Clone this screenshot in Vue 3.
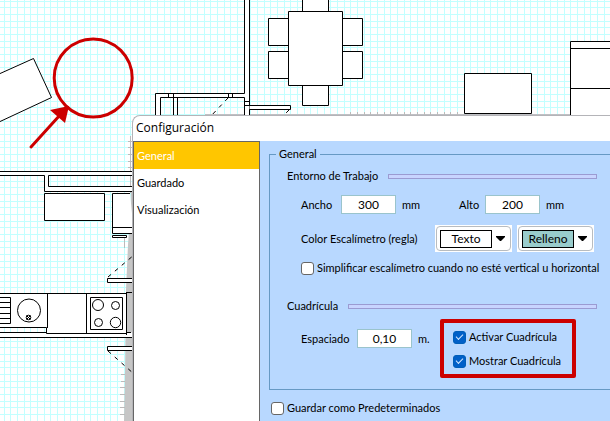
<script setup>
import { ref } from 'vue'

const sections = ['General', 'Guardado', 'Visualización']
const active = ref('General')
const width = ref('300')
const height = ref('200')
const spacing = ref('0,10')
const simplify = ref(false)
const gridOn = ref(true)
const gridVisible = ref(true)
const saveDefault = ref(false)
</script>

<template>
  <main class="stage">
    <svg class="plan" width="100%" height="100%" aria-hidden="true">
      <defs>
        <pattern id="grid" width="20" height="20" patternUnits="userSpaceOnUse">
          <path d="M4.5 0V20M10.5 0V20M17.5 0V20M0 1.5H20M0 7.5H20M0 14.5H20" stroke="#c3ffff" fill="none" />
        </pattern>
      </defs>
      <rect width="100%" height="100%" fill="url(#grid)" />

      <!-- dialog shadow -->
      <path d="M131 190L130 215L128 245L126 290L125 375L124 421H134V190Z" fill="#c6c6c6" />
      <path d="M205 114H610V117H205Z" fill="#bfc0c4" />
      <path class="ticks" d="M384.5 112V116M390.5 112V116M397.5 112V116M404.5 112V116M410.5 112V116M417.5 112V116M424.5 112V116M430.5 112V116M437.5 112V116M444.5 112V116M450.5 112V116M457.5 112V116M350.5 112V116M357.5 112V116M364.5 112V116M370.5 112V116M377.5 112V116M130.5 136V193M128 141.5H133M128 147.5H133M128 154.5H133M128 161.5H133M128 167.5H133M124.5 238V248M121 374.5H125M121 381.5H125M120 387.5H125M120 394.5H125M120 401.5H125M120 407.5H125M120 414.5H125" />

      <g class="ink">
        <!-- walls -->
        <path class="gap" d="M244.500 -1V93.500H155.500V118H160.500V97.500H244.500V118H249.500V-1Z" />
        <path d="M168.500 93V97M173.500 93V118M177.500 97V118M228.500 93V97M232.500 93V97M244 101.500H249" />
        <path class="gap" d="M249.500 105.500H290.500V109.500H249.500" />
        <path d="M244 105.500H250" />
        <path class="dash" d="M228 98L210 117M289 110L283 116" />
        <path class="gap" d="M-1 171.500H140V175.500H48.500V186.500H140V191.500H44.500V175.500H-1Z" />

        <!-- dining table -->
        <path class="solid" d="M268.500 18.500H288.500V45.500H268.500ZM268.500 51.500H288.500V78.500H268.500ZM342.500 18.500H362.500V45.500H342.500ZM342.500 51.500H362.500V78.500H342.500ZM302.500 -1H328.500V11.500H302.500ZM302.500 85.500H328.500V105.500H302.500ZM288.500 11.500H342.500V85.500H288.500Z" />

        <!-- furniture -->
        <path class="solid" d="M464.500 73.500H531.500V113.500H464.500Z" />
        <path class="solid" d="M570.500 41.500H2000V118H570.500ZM570.500 48.500H2000M570.500 88.500H2000" />
        <path class="solid" d="M-1 74L33.500 58.500L51.500 97.500L-1 122Z" />
        <path class="solid" d="M44.500 193.500H104.500V220.500H44.500Z" />
        <path class="solid" d="M130 193.500H112.500V233.500H134M112.500 227.500H134M112.500 235.500H126.500V237.500H112.500Z" />

        <!-- doors -->
        <path class="solid" d="M134 278.500H107.500V282.500H134M134 346.500H107.500V350.500H134" />
        <path class="dash" d="M108 277L134 255M108 351L134 374" />

        <!-- kitchen -->
        <path class="gap" d="M-1 332.500H46.500V333.500H127V332.500H134V337.500H-1Z" stroke="none" />
        <path class="solid" d="M-1 293.500H126.500V333.500H46.500V327.500H-1Z" />
        <path d="M47.500 293V328M86.500 293V334M126 292.500H134M126.500 292V335M-1 332.500H46M126 332.500H131M-1 337.500H134M0 297.500H10.500V323.500H0M0 302.500H10M0 307.500H10M0 313.500H10M0 318.500H10M90.500 297.500H122.500V329.500H90.500Z" />
        <circle cx="29" cy="310.500" r="11.500" />
        <circle cx="28.500" cy="317.500" r="2.300" />
        <path d="M26.500 315.500L30.500 319.500M30.500 315.500L26.500 319.500" />
        <circle cx="98" cy="305" r="5.500" />
        <circle cx="115.500" cy="305.500" r="4" />
        <circle cx="98.500" cy="322.500" r="4" />
        <circle cx="115.500" cy="322.500" r="5.200" />
      </g>

      <!-- red marker -->
      <circle cx="93.200" cy="78" r="39" fill="none" stroke="#c00" stroke-width="3" />
      <path d="M31 147L60 115" stroke="#c00" stroke-width="3" stroke-linecap="round" />
      <path d="M50 110L69 106L65 123Z" fill="#c00" />
    </svg>

    <section class="dialog" aria-labelledby="title">
      <h1 id="title" class="title">Configuración</h1>
      <div class="body">
        <nav class="side">
          <button
            v-for="name in sections"
            :key="name"
            type="button"
            class="tab"
            :class="{ on: name === active }"
            @click="active = name"
          >{{ name }}</button>
        </nav>

        <form class="content" @submit.prevent>
          <fieldset class="group">
            <legend>General</legend>

            <h2 class="heading">Entorno de Trabajo</h2>
            <div class="row sizes">
              <label for="w" class="ancho">Ancho</label>
              <input id="w" v-model="width" class="num" type="text" />
              <span class="unit">mm</span>
              <label for="h" class="alto">Alto</label>
              <input id="h" v-model="height" class="num" type="text" />
              <span class="unit">mm</span>
            </div>
            <div class="row colors">
              <span id="scale" class="caption">Color Escalímetro (regla)</span>
              <span class="picker">
                <select aria-labelledby="scale"><option>Texto</option></select>
                <svg width="9" height="6" viewBox="0 0 9 6"><path d="M0 0H9V1L5 5H4L0 1Z" /></svg>
              </span>
              <span class="picker fill">
                <select aria-labelledby="scale"><option>Relleno</option></select>
                <svg width="9" height="6" viewBox="0 0 9 6"><path d="M0 0H9V1L5 5H4L0 1Z" /></svg>
              </span>
            </div>
            <label class="row check simplify">
              <input v-model="simplify" type="checkbox" />
              Simplificar escalímetro cuando no esté vertical u horizontal
            </label>

            <h2 class="heading second">Cuadrícula</h2>
            <div class="row grid-row">
              <div class="spacing">
                <label for="s">Espaciado</label>
                <input id="s" v-model="spacing" class="num" type="text" />
                <span class="unit">m.</span>
              </div>
              <div class="marked">
                <label class="check"><input v-model="gridOn" type="checkbox" />Activar Cuadrícula</label>
                <label class="check"><input v-model="gridVisible" type="checkbox" />Mostrar Cuadrícula</label>
              </div>
            </div>
          </fieldset>

          <label class="check defaults">
            <input v-model="saveDefault" type="checkbox" />
            Guardar como Predeterminados
          </label>
        </form>
      </div>
    </section>
  </main>
</template>

<style>
body {
  margin: 0;
  background: #fff;
}
</style>

<style scoped>
* {
  box-sizing: border-box;
}
.stage {
  position: relative;
  display: flex;
  min-height: 100vh;
  padding: 115px 0 0 132px;
  overflow: hidden;
  font: 11px/16px Lato, "Liberation Sans", sans-serif;
  color: #000;
}
.plan {
  position: absolute;
  inset: 0;
}
.ink {
  fill: none;
  stroke: #000;
  stroke-width: 1;
}
.solid,
.gap {
  fill: #fff;
}
.dash {
  stroke-dasharray: 4 5;
}
.ticks {
  fill: none;
  stroke: #bbb;
}
.dialog {
  position: relative;
  flex: 1;
  min-width: 0;
  display: flex;
  flex-direction: column;
  border: solid #b4b4b8;
  border-width: 1px 0 0 1px;
  border-top-left-radius: 8px;
  background: #fff;
  overflow: hidden;
}
.title {
  margin: 0;
  padding: 4px 3px 5px;
  font: 12px/16px "Open Sans", "Noto Sans", sans-serif;
}
.body {
  flex: 1;
  display: flex;
}
.side {
  width: 127px;
  flex: none;
  border: 1px solid #666;
  border-bottom: 0;
}
.tab {
  display: block;
  width: 100%;
  height: 27px;
  padding: 0 3px;
  border: 0;
  background: #fff;
  color: #000;
  font: inherit;
  text-align: left;
}
.tab.on {
  background: #ffc600;
  color: #fff;
}
.content {
  flex: 1;
  min-width: 0;
  padding: 5px 0 0 9px;
  background: #b8d8ff;
}
.group {
  min-width: 0;
  margin: 0;
  padding: 0 0 11px 17px;
  border: 1px solid #6699c4;
  border-right: 0;
}
legend {
  margin-left: -11px;
  padding: 0 3px;
}
.heading {
  display: flex;
  align-items: center;
  gap: 10px;
  margin: 6px 13px 0 0;
  font: inherit;
}
.heading::after {
  content: "";
  flex: 1;
  height: 3px;
  border: 1px solid #9b9bd2;
  background: #c8d4ff;
}
.row {
  display: flex;
  align-items: center;
  margin-left: 14px;
  white-space: nowrap;
}
.sizes {
  margin-top: 11px;
}
.ancho {
  width: 40px;
}
.sizes .unit {
  width: 57px;
}
.alto {
  width: 26px;
}
.num {
  width: 55px;
  height: 19px;
  padding: 0;
  border: 1px solid #9ac4cc;
  background: #fff;
  color: #000;
  font: inherit;
  font-size: 12px;
  text-align: center;
}
.unit {
  margin-left: 6px;
}
.colors {
  margin-top: 11px;
  gap: 5px;
}
.caption {
  width: 129px;
}
.picker {
  position: relative;
  flex: none;
  display: flex;
  align-items: center;
  gap: 4px;
  width: 77px;
  height: 27px;
  padding: 0 5px;
  background: #fff;
}
.picker::before {
  content: "";
  position: absolute;
  inset: 1px;
  border: 1px solid #b8bcc0;
  border-radius: 4px;
  pointer-events: none;
}
select {
  appearance: none;
  width: 52px;
  height: 18px;
  padding: 0;
  border: 1px solid #000;
  border-radius: 0;
  background: #fff;
  color: #000;
  font: inherit;
  font-size: 12px;
  text-align: center;
  text-align-last: center;
}
.fill select {
  background: #99cccc;
}
.check {
  display: flex;
  align-items: center;
  gap: 3px;
}
.check input {
  appearance: none;
  flex: none;
  width: 13px;
  height: 13px;
  margin: 0;
  border: 1px solid #666;
  border-radius: 3px;
  background: #fff;
}
.check input:checked {
  display: grid;
  place-items: center;
  border-color: #005fb8;
  background: #0060c8;
}
.check input:checked::before {
  content: "";
  width: 6px;
  height: 3px;
  margin-bottom: 2px;
  border: solid #d4e8ff;
  border-width: 0 0 1px 1px;
  transform: rotate(-45deg);
}
.simplify {
  margin-top: 8px;
}
.second {
  margin-top: 22px;
}
.grid-row {
  align-items: flex-start;
  margin-top: 5px;
}
.spacing {
  display: flex;
  align-items: center;
  width: 139px;
  margin-top: 10px;
}
.spacing label {
  width: 56px;
}
.marked {
  display: grid;
  gap: 8px;
  width: 136px;
  padding: 6px 9px 5px;
  border: 4px solid #c00;
  border-radius: 2px;
}
.defaults {
  margin: 10px 2px 0;
}
</style>
